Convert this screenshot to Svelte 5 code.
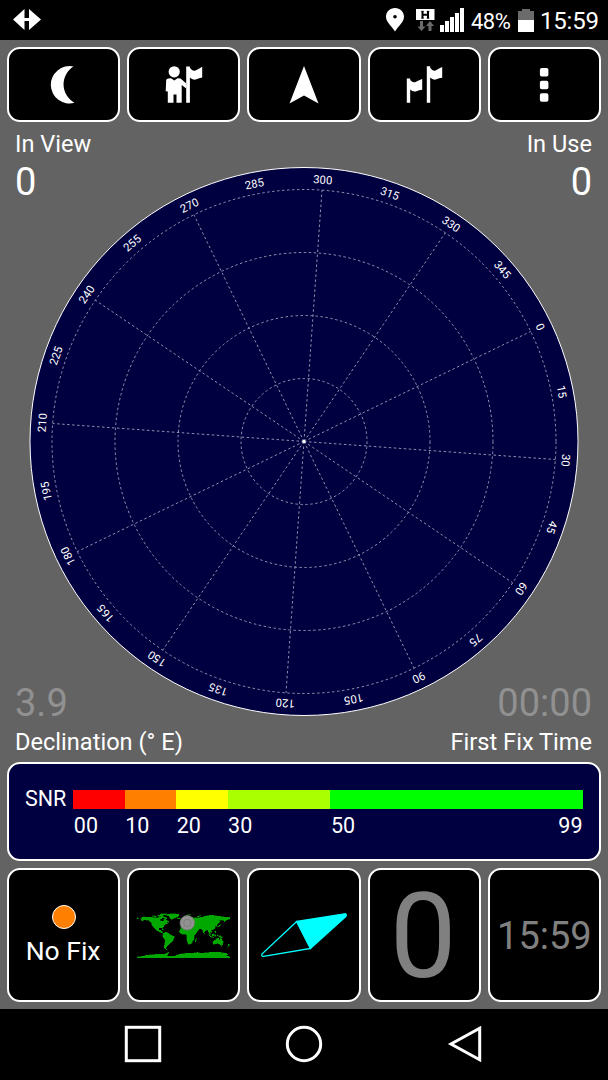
<script lang="ts">
	type Zone = { from: number; to: number; color: string };

	// the dial is turned by the current heading
	const rotation = 64.1;
	const center = 275;

	const rings = [63, 126, 189, 252];
	const labels = Array.from({ length: 24 }, (_, i) => i * 15);
	const spokes = labels.filter((deg) => deg % 30 === 0);

	const zones: Zone[] = [
		{ from: 0, to: 10, color: "#ff0000" },
		{ from: 10, to: 20, color: "#ff8000" },
		{ from: 20, to: 30, color: "#ffff00" },
		{ from: 30, to: 50, color: "#aaff00" },
		{ from: 50, to: 99, color: "#00ff00" },
	];

	// outlines in longitude / negative latitude
	const land = [
		"-168,-66 -156,-71 -141,-70 -128,-70 -115,-68 -108,-68 -96,-68 -94,-72 -86,-69 -82,-68 -86,-64 -94,-60 -92,-57 -82,-55 -80,-51 -77,-56 -77,-62 -70,-61 -65,-58 -56,-52 -66,-49 -62,-46 -70,-43 -75,-39 -76,-35 -81,-31 -80,-25 -84,-30 -95,-29 -97,-22 -91,-18 -87,-21 -89,-16 -83,-15 -83,-9 -77,-8 -85,-10 -92,-14 -105,-19 -113,-31 -109,-23 -117,-33 -124,-40 -124,-48 -134,-57 -150,-60 -164,-55 -157,-59 -165,-61 -160,-65",
		"-180,-68 -173,-66 -178,-64",
		"-124,-74 -116,-73 -112,-70 -105,-69 -105,-73 -117,-76",
		"-90,-73 -80,-73 -67,-69 -63,-65 -70,-63 -76,-66 -85,-70",
		"-100,-77 -88,-79 -92,-82 -70,-83 -62,-82 -76,-78 -82,-75 -98,-74",
		"-73,-78 -60,-82 -32,-83 -18,-80 -22,-71 -40,-65 -44,-60 -52,-65 -56,-75",
		"-78,-8 -72,-12 -62,-10 -50,-1 -35,6 -39,15 -42,23 -48,27 -56,35 -62,39 -66,45 -69,51 -66,55 -74,51 -74,38 -71,18 -80,6 -80,-2",
		"-84,-22 -75,-20 -82,-23",
		"-10,-44 -9,-37 0,-39 3,-43 12,-44 18,-40 23,-37 27,-40 36,-37 34,-31 43,-12 51,-12 59,-22 50,-30 57,-26 67,-25 73,-19 77,-8 81,-15 91,-22 95,-16 99,-7 104,-1 100,-13 109,-11 106,-20 120,-25 122,-31 118,-38 126,-34 129,-37 128,-41 139,-50 141,-54 136,-58 155,-59 157,-51 163,-58 178,-63 180,-69 160,-70 140,-73 113,-77 104,-78 80,-73 68,-69 41,-67 28,-71 18,-69 5,-61 6,-57 -1,-50 -2,-44",
		"-17,-14 -10,-31 -5,-36 10,-37 20,-31 33,-31 43,-12 51,-12 40,2 40,16 34,24 32,29 24,34 18,34 12,17 13,5 9,-4 -8,-4",
		"-24,-66 -14,-66 -14,-64 -22,-64",
		"-9,-54 -5,-58 1,-53 -5,-50",
		"11,-78 27,-80 17,-77",
		"52,-72 68,-77 57,-70",
		"44,24 49,12 49,17 46,25",
		"79,-10 82,-7 80,-6",
		"130,-32 136,-35 142,-43 141,-36 134,-33",
		"120,-18 122,-18 126,-7 122,-10",
		"95,-6 106,5 104,6 98,-1",
		"105,6 116,8 109,8",
		"109,-2 117,-6 118,-1 114,4 110,2",
		"119,-1 124,-2 122,5 120,5",
		"130,0 144,3 151,10 140,8 132,3",
		"113,24 122,17 130,12 136,12 136,16 141,17 143,10 153,25 151,35 145,39 138,34 130,31 115,35",
		"145,41 148,41 147,44",
		"173,34 178,38 174,42 167,47 172,40",
		"-180,84 -150,80 -148,77 -115,75 -102,73 -92,73 -75,74 -62,68 -57,64 -62,75 -65,81 -35,80 -15,73 10,70 35,69 55,66 70,70 85,67 110,66 140,66 165,70 171,74 163,78 180,84 180,90 -180,90",
	];

	function point(deg: number, r: number) {
		const a = ((deg + rotation) * Math.PI) / 180;
		return { x: center + r * Math.sin(a), y: center - r * Math.cos(a) };
	}
</script>

<div class="screen">
	<header class="status">
		<svg class="logo" width="28" height="22" viewBox="0 0 28 22">
			<path d="M0 10.500 11.500 0V9H16V0L28 10.500 16 21V12H11.500V21Z" fill="#fff" />
		</svg>
		<svg class="pin" width="18" height="24" viewBox="0 0 18 24">
			<path d="M9 0C4 0 0 3.900 0 8.800 0 14 5.500 18 9 23.500 12.500 18 18 14 18 8.800 18 3.900 14 0 9 0Z" fill="#fff" />
			<circle cx="9" cy="8.800" r="1.800" fill="#000" />
		</svg>
		<svg class="data" width="19" height="24" viewBox="0 0 19 24">
			<path d="M0 1H18.500V12H0Z" fill="#fff" />
			<path d="M6.500 3V10.500M12 3V10.500M6.500 6.700H12" fill="none" stroke="#000" stroke-width="2" />
			<path d="M5 3.300H8M5 10.200H8M10.500 3.300H13.500M10.500 10.200H13.500" fill="none" stroke="#000" stroke-width="0.600" />
			<path d="M4 13H7V18.500H9.500L5.500 23 1.500 18.500H4ZM12.500 23V18H10L14 13 18 18H15.500V23Z" fill="#6b6b6b" />
		</svg>
		<svg class="signal" width="24" height="24" viewBox="0 0 24 24">
			<path d="M0 17H4V24H0ZM5 13H9V24H5ZM10 9H14V24H10ZM15 5H19V24H15ZM20 0H24V24H20Z" fill="#fff" />
		</svg>
		<span class="percent">48%</span>
		<svg class="battery" width="16" height="24" viewBox="0 0 16 24">
			<path d="M4 1H12V3H16V12H0V3H4Z" fill="#6b6b6b" />
			<path d="M0 12H16V24H0Z" fill="#fff" />
		</svg>
		<span class="clock">15:59</span>
	</header>

	<main>
		<nav class="toolbar">
			<button aria-label="Night mode">
				<svg width="38" height="38" viewBox="0 0 38 38">
					<path d="M28.500 .500A18.700 18.700 0 1 0 29.500 36.800A21 21 0 0 1 28.500 .500Z" />
				</svg>
			</button>
			<button aria-label="Position">
				<svg width="38" height="38" viewBox="0 0 38 38">
					<circle cx="9.200" cy="5.800" r="5.600" />
					<path d="M3.500 12.500 6 12.200 9.300 14.500 12.500 12.200 15.500 12.500 21.300 17.500V22.500L16.700 19V36.700H11.500V28.500H8.500V36.700H2.800V25.500L.700 25.200 1.200 14Q1.500 12.700 3.500 12.500Z" />
					<path d="M21.200 .500H24.900V1.800Q27.500 6 31 4.200T37.200 .800V11.500Q34 12 31.500 13.300 27.500 14.500 24.900 11.500V36.700H21.200Z" />
				</svg>
			</button>
			<button aria-label="Navigate">
				<svg width="38" height="38" viewBox="0 0 38 38">
					<path d="M19 0 33.500 37.500 19 29.500 4.500 37.500Z" />
				</svg>
			</button>
			<button aria-label="Route">
				<svg width="38" height="38" viewBox="0 0 38 38">
					<path d="M1.800 12.500H5.200V14Q8 17.500 11 15.800T17.200 13V23.800Q14 24 11.500 25.200 8 26.500 5.200 23.500V36.800H1.800Z" />
					<path d="M21.800 .200H25.200V1.800Q28 6 31 4.200T37.200 1V11.800Q34 12 31.500 13.300 28 14.500 25.200 11.500V36.800H21.800Z" />
				</svg>
			</button>
			<button aria-label="Menu">
				<svg width="38" height="38" viewBox="0 0 38 38">
					<rect x="14.900" y="2" width="8.500" height="8.500" rx="1.800" />
					<rect x="14.900" y="14.700" width="8.500" height="8.500" rx="1.800" />
					<rect x="14.900" y="27.200" width="8.500" height="8.500" rx="1.800" />
				</svg>
			</button>
		</nav>

		<section class="sky">
			<svg class="dial" width="550" height="550" viewBox="0 0.5 550 550">
				<circle class="disc" cx={center} cy={center} r="274" />
				{#each rings as r}
					<circle class="grid" cx={center} cy={center} {r} />
				{/each}
				{#each spokes as deg}
					{@const end = point(deg, 252)}
					<line class="grid" x1={center} y1={center} x2={end.x} y2={end.y} />
				{/each}
				<circle cx={center} cy={center} r="1.500" fill="#fff" />
				{#each labels as deg}
					<text x={center} y={center - 258.5} transform="rotate({deg + rotation} {center} {center})">{deg}</text>
				{/each}
			</svg>
			<div class="corner">
				<span>In View</span>
				<b>0</b>
			</div>
			<div class="corner right">
				<span>In Use</span>
				<b>0</b>
			</div>
			<div class="corner bottom">
				<b>3.9</b>
				<span>Declination (° E)</span>
			</div>
			<div class="corner right bottom">
				<b>00:00</b>
				<span>First Fix Time</span>
			</div>
		</section>

		<section class="snr">
			<span class="name">SNR</span>
			<div class="scale">
				{#each zones as zone}
					<div class="zone" style="flex-grow: {zone.to - zone.from}">
						<div class="bar" style="background: {zone.color}"></div>
						<div class="marks">
							<span>{String(zone.from).padStart(2, "0")}</span>
							{#if zone.to === 99}
								<span>99</span>
							{/if}
						</div>
					</div>
				{/each}
			</div>
		</section>

		<section class="tiles">
			<div class="tile fix">
				<i class="led"></i>
				<span>No Fix</span>
			</div>
			<div class="tile">
				<svg width="93.300" height="46.600" viewBox="-180 -90 360 180">
					{#each land as points}
						<polygon {points} />
					{/each}
					<g class="here">
						<circle cx="14" cy="-48" r="28" />
						<circle cx="14" cy="-48" r="14" />
					</g>
				</svg>
			</div>
			<div class="tile">
				<svg class="needle" width="88" height="46" viewBox="0 0 88 46">
					<path d="M36.700 9.500 84.500 1.800Q87 1.500 86 4.500L50.500 36.500Z" fill="#0ff" />
					<path d="M36.700 9.500 1.900 42Q1.200 44.700 3.500 44.300L50.500 36.500Z" />
				</svg>
			</div>
			<div class="tile speed">0</div>
			<div class="tile time">15:59</div>
		</section>
	</main>

	<footer>
		<svg width="38" height="38" viewBox="0 0 38 38">
			<rect x="2.300" y="2.300" width="33.400" height="33.400" />
		</svg>
		<svg width="38" height="38" viewBox="0 0 38 38">
			<circle cx="19" cy="19" r="16.700" />
		</svg>
		<svg width="38" height="38" viewBox="0 0 38 38">
			<path d="M33.700 3.300V34.700L5 19Z" />
		</svg>
	</footer>
</div>

<style>
	:global(body) {
		margin: 0;
		background: #000;
	}

	.screen {
		width: 608px;
		height: 1080px;
		display: flex;
		flex-direction: column;
		background: #000;
		color: #fff;
		font-family: Roboto, sans-serif;
		overflow: hidden;
	}

	svg {
		display: block;
		flex: none;
	}

	.status {
		height: 40px;
		padding: 0 10px 0 13px;
		box-sizing: border-box;
		display: flex;
		align-items: center;
	}
	.logo {
		margin-right: auto;
	}
	.pin {
		margin-right: 12px;
	}
	.data {
		margin-right: 5px;
	}
	.signal {
		margin-right: 7px;
	}
	.percent {
		width: 47px;
		font-size: 22px;
		letter-spacing: -0.5px;
		padding-top: 2px;
	}
	.battery {
		margin-right: 6px;
	}
	.clock {
		font-size: 24px;
		letter-spacing: -0.2px;
		width: 58px;
		padding-top: 2px;
	}

	main {
		height: 969px;
		padding: 7px;
		box-sizing: border-box;
		background: #636363;
		display: flex;
		flex-direction: column;
	}

	.toolbar,
	.tiles {
		display: grid;
		grid-template: 100% / repeat(5, 1fr);
		gap: 7px;
	}
	.toolbar {
		height: 75px;
	}
	.toolbar button,
	.tile,
	.snr {
		border: 2px solid #fff;
		border-radius: 13px;
		background: #000;
		box-sizing: border-box;
		min-width: 0;
	}
	.toolbar button {
		padding: 0;
		display: flex;
		align-items: center;
		justify-content: center;
		fill: #fff;
	}

	.sky {
		height: 640px;
		display: grid;
		grid-template: 1fr 1fr / 1fr 1fr;
	}
	.dial {
		grid-area: 1 / 1 / 3 / 3;
		place-self: center;
	}
	.disc {
		fill: #000040;
		stroke: #fff;
		stroke-width: 1;
	}
	.grid {
		fill: none;
		stroke: #b4b4c8;
		stroke-width: 0.8;
		stroke-dasharray: 2.5 2.5;
	}
	.dial text {
		fill: #fff;
		font-size: 11.3px;
		text-anchor: middle;
	}
	.corner {
		grid-area: 1 / 1;
		padding: 8px 8px 0;
		display: flex;
		flex-direction: column;
		font-size: 23.6px;
		line-height: 28px;
	}
	.corner b {
		font-size: 38px;
		font-weight: 400;
		line-height: 48px;
	}
	.corner.right {
		grid-column: 2;
		padding-right: 9px;
		text-align: right;
	}
	.corner.bottom {
		grid-row: 2;
		justify-content: flex-end;
		padding-bottom: 6px;
	}
	.corner.bottom b {
		line-height: 50px;
		color: #919191;
	}

	.snr {
		height: 99px;
		padding: 26px 16.500px 0 16px;
		background: #000040;
		display: flex;
		font-size: 21.5px;
	}
	.name {
		width: 48.300px;
		line-height: 18px;
	}
	.scale {
		flex: 1;
		display: flex;
	}
	.zone {
		flex-basis: 0;
		min-width: 0;
	}
	.bar {
		height: 19px;
	}
	.marks {
		display: flex;
		justify-content: space-between;
		line-height: 26px;
		padding: 4px 0 0 0.500px;
	}

	.tiles {
		height: 134px;
		margin-top: 7px;
	}
	.tile {
		display: flex;
		align-items: center;
		justify-content: center;
	}
	.fix {
		flex-direction: column;
		font-size: 26.5px;
		line-height: 30px;
	}
	.led {
		width: 22px;
		height: 22px;
		margin-bottom: 7px;
		border: 1px solid #fff;
		border-radius: 50%;
		background: #ff8000;
	}
	.fix span {
		margin-right: 1px;
	}
	.tile polygon {
		fill: #00a800;
		stroke: #00a800;
		stroke-width: 1.5;
		shape-rendering: crispEdges;
	}
	.here circle {
		fill: #929292;
		stroke: #777;
		stroke-width: 3;
	}
	.needle {
		fill: none;
		stroke: #0ff;
		stroke-width: 1.3;
	}
	.speed {
		padding: 4px 2px 0 0;
		font-size: 119px;
		line-height: 120px;
		color: #808080;
	}
	.time {
		padding-top: 2px;
		font-size: 38px;
		color: #808080;
	}

	footer {
		height: 71px;
		padding: 0 1px 1px 0;
		box-sizing: border-box;
		display: flex;
		align-items: center;
		justify-content: center;
		gap: 123px;
		fill: none;
		stroke: #fff;
		stroke-width: 3;
	}
</style>
